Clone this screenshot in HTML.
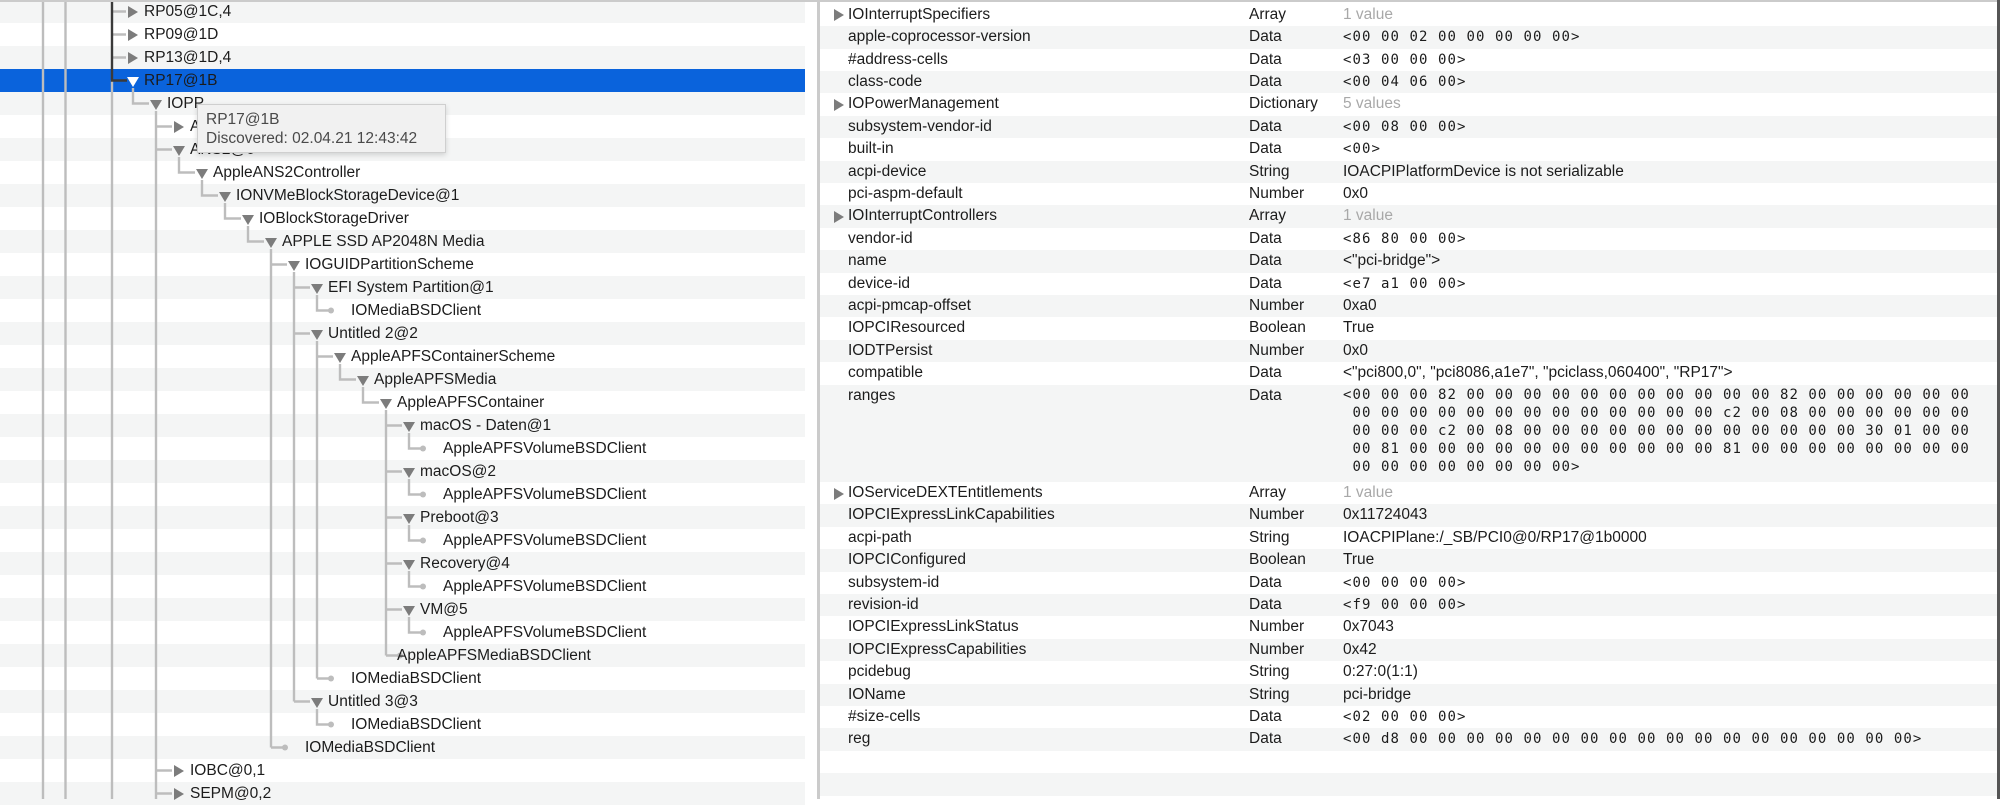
<!DOCTYPE html>
<html><head><meta charset="utf-8"><style>
*{margin:0;padding:0;box-sizing:border-box}
body{width:2000px;height:799px;overflow:hidden;background:#fff;position:relative;font-family:"Liberation Sans",sans-serif;font-size:15.5px;color:#1c1c1c}
.r{position:absolute;left:0;width:805px;height:23px}
.g{background:#f4f5f5}
.sel{background:#0a63dc}
.t{position:absolute;white-space:nowrap;line-height:23px;top:0}
.tc{position:absolute;top:5.5px;width:0;height:0;border-top:6px solid transparent;border-bottom:6px solid transparent;border-left:10px solid #7c7c7c}
.to{position:absolute;top:7.5px;width:0;height:0;border-left:6px solid transparent;border-right:6px solid transparent;border-top:10px solid #7c7c7c}
.rr{position:absolute;left:820px;width:1177px;height:22.4px}
.rr .c{position:absolute;top:0;line-height:22.4px;white-space:nowrap}
.n{left:28px}.ty{left:429px}.v{left:523px}
.m{font-family:"DejaVu Sans Mono",monospace;font-size:14px;letter-spacing:1.07px}
.gr{color:#a8a8a8}
.rt{position:absolute;left:14px;top:5.5px;width:0;height:0;border-top:6px solid transparent;border-bottom:6px solid transparent;border-left:10px solid #7c7c7c}
</style></head><body>

<div class="r g" style="top:0"></div>
<div class="r g" style="top:46px"></div>
<div class="r sel" style="top:69px"></div>
<div class="r g" style="top:92px"></div>
<div class="r g" style="top:138px"></div>
<div class="r g" style="top:184px"></div>
<div class="r g" style="top:230px"></div>
<div class="r g" style="top:276px"></div>
<div class="r g" style="top:322px"></div>
<div class="r g" style="top:368px"></div>
<div class="r g" style="top:414px"></div>
<div class="r g" style="top:460px"></div>
<div class="r g" style="top:506px"></div>
<div class="r g" style="top:552px"></div>
<div class="r g" style="top:598px"></div>
<div class="r g" style="top:644px"></div>
<div class="r g" style="top:690px"></div>
<div class="r g" style="top:736px"></div>
<div class="r g" style="top:782px"></div>

<svg style="position:absolute;left:0;top:0" width="805" height="799">
<g stroke="#bdbdbd" stroke-width="2.4" fill="none">
<line x1="43" y1="0" x2="43" y2="799"/>
<line x1="65.5" y1="0" x2="65.5" y2="799"/>
<line x1="112" y1="80" x2="112" y2="799"/>
<path d="M112 11.5H126M112 34.5H126M112 57.5H126"/>
<path d="M133 88V103.5H149"/>
<path d="M156 111V799M156 126.5H172M156 149.5H172M156 770.5H172M156 793.5H172"/>
<path d="M179 157V172.5H195"/>
<path d="M202 180V195.5H218"/>
<path d="M225 203V218.5H241"/>
<path d="M248 226V241.5H264"/>
<path d="M271 249V747.5M271 264.5H287M271 747.5H285"/>
<path d="M294 272V701.5M294 287.5H310M294 333.5H310M294 701.5H310"/>
<path d="M317 295V310.5H331"/>
<path d="M317 341V678.5M317 356.5H333M317 678.5H331"/>
<path d="M317 709V724.5H331"/>
<path d="M340 364V379.5H356"/>
<path d="M363 387V402.5H379"/>
<path d="M386 410V655.5M386 425.5H402M386 471.5H402M386 517.5H402M386 563.5H402M386 609.5H402M386 655.5H400"/>
<path d="M409 433V448.5H423M409 479V494.5H423M409 525V540.5H423M409 571V586.5H423M409 617V632.5H423"/>
</g>
<g fill="#bdbdbd">
<circle cx="331" cy="310.5" r="3"/><circle cx="331" cy="678.5" r="3"/><circle cx="331" cy="724.5" r="3"/>
<circle cx="285" cy="747.5" r="3"/><circle cx="400" cy="655.5" r="3"/>
<circle cx="423" cy="448.5" r="3"/><circle cx="423" cy="494.5" r="3"/><circle cx="423" cy="540.5" r="3"/><circle cx="423" cy="586.5" r="3"/><circle cx="423" cy="632.5" r="3"/>
</g>
<path d="M112 0V80.5H127" stroke="#3a3a3a" stroke-width="2.4" fill="none"/>
</svg>

<div class="r" style="top:0;background:none"><i class="tc" style="left:128px"></i><span class="t" style="left:144px">RP05@1C,4</span></div>
<div class="r" style="top:23px;background:none"><i class="tc" style="left:128px"></i><span class="t" style="left:144px">RP09@1D</span></div>
<div class="r" style="top:46px;background:none"><i class="tc" style="left:128px"></i><span class="t" style="left:144px">RP13@1D,4</span></div>
<div class="r" style="top:69px;background:none"><i class="to" style="left:127px;border-top-color:#fff"></i><span class="t" style="left:144px">RP17@1B</span></div>
<div class="r" style="top:92px;background:none"><i class="to" style="left:150px"></i><span class="t" style="left:167px">IOPP</span></div>
<div class="r" style="top:115px;background:none"><i class="tc" style="left:174px"></i><span class="t" style="left:190px">A</span></div>
<div class="r" style="top:138px;background:none"><i class="to" style="left:173px"></i><span class="t" style="left:190px">ANS2@0</span></div>
<div class="r" style="top:161px;background:none"><i class="to" style="left:196px"></i><span class="t" style="left:213px">AppleANS2Controller</span></div>
<div class="r" style="top:184px;background:none"><i class="to" style="left:219px"></i><span class="t" style="left:236px">IONVMeBlockStorageDevice@1</span></div>
<div class="r" style="top:207px;background:none"><i class="to" style="left:242px"></i><span class="t" style="left:259px">IOBlockStorageDriver</span></div>
<div class="r" style="top:230px;background:none"><i class="to" style="left:265px"></i><span class="t" style="left:282px">APPLE SSD AP2048N Media</span></div>
<div class="r" style="top:253px;background:none"><i class="to" style="left:288px"></i><span class="t" style="left:305px">IOGUIDPartitionScheme</span></div>
<div class="r" style="top:276px;background:none"><i class="to" style="left:311px"></i><span class="t" style="left:328px">EFI System Partition@1</span></div>
<div class="r" style="top:299px;background:none"><span class="t" style="left:351px">IOMediaBSDClient</span></div>
<div class="r" style="top:322px;background:none"><i class="to" style="left:311px"></i><span class="t" style="left:328px">Untitled 2@2</span></div>
<div class="r" style="top:345px;background:none"><i class="to" style="left:334px"></i><span class="t" style="left:351px">AppleAPFSContainerScheme</span></div>
<div class="r" style="top:368px;background:none"><i class="to" style="left:357px"></i><span class="t" style="left:374px">AppleAPFSMedia</span></div>
<div class="r" style="top:391px;background:none"><i class="to" style="left:380px"></i><span class="t" style="left:397px">AppleAPFSContainer</span></div>
<div class="r" style="top:414px;background:none"><i class="to" style="left:403px"></i><span class="t" style="left:420px">macOS - Daten@1</span></div>
<div class="r" style="top:437px;background:none"><span class="t" style="left:443px">AppleAPFSVolumeBSDClient</span></div>
<div class="r" style="top:460px;background:none"><i class="to" style="left:403px"></i><span class="t" style="left:420px">macOS@2</span></div>
<div class="r" style="top:483px;background:none"><span class="t" style="left:443px">AppleAPFSVolumeBSDClient</span></div>
<div class="r" style="top:506px;background:none"><i class="to" style="left:403px"></i><span class="t" style="left:420px">Preboot@3</span></div>
<div class="r" style="top:529px;background:none"><span class="t" style="left:443px">AppleAPFSVolumeBSDClient</span></div>
<div class="r" style="top:552px;background:none"><i class="to" style="left:403px"></i><span class="t" style="left:420px">Recovery@4</span></div>
<div class="r" style="top:575px;background:none"><span class="t" style="left:443px">AppleAPFSVolumeBSDClient</span></div>
<div class="r" style="top:598px;background:none"><i class="to" style="left:403px"></i><span class="t" style="left:420px">VM@5</span></div>
<div class="r" style="top:621px;background:none"><span class="t" style="left:443px">AppleAPFSVolumeBSDClient</span></div>
<div class="r" style="top:644px;background:none"><span class="t" style="left:397px">AppleAPFSMediaBSDClient</span></div>
<div class="r" style="top:667px;background:none"><span class="t" style="left:351px">IOMediaBSDClient</span></div>
<div class="r" style="top:690px;background:none"><i class="to" style="left:311px"></i><span class="t" style="left:328px">Untitled 3@3</span></div>
<div class="r" style="top:713px;background:none"><span class="t" style="left:351px">IOMediaBSDClient</span></div>
<div class="r" style="top:736px;background:none"><span class="t" style="left:305px">IOMediaBSDClient</span></div>
<div class="r" style="top:759px;background:none"><i class="tc" style="left:174px"></i><span class="t" style="left:190px">IOBC@0,1</span></div>
<div class="r" style="top:782px;background:none"><i class="tc" style="left:174px"></i><span class="t" style="left:190px">SEPM@0,2</span></div>

<div style="position:absolute;left:197px;top:104px;width:249px;height:49px;background:#f1f1f1;border:1px solid #cfcfcf;box-shadow:0 2px 5px rgba(0,0,0,.15);color:#4a4a4a;padding:5px 0 0 8px;line-height:19px;font-size:15.5px">RP17@1B<br>Discovered: 02.04.21 12:43:42</div>

<div style="position:absolute;left:805px;top:0;width:13px;height:799px;background:#fff"></div>
<div style="position:absolute;left:817px;top:0;width:3px;height:799px;background:#cbcbcb"></div>
<div style="position:absolute;left:0;top:0;width:2000px;height:2px;background:#cbcbcb"></div>
<div style="position:absolute;left:1997px;top:0;width:3px;height:799px;background:#555"></div>

<div class="rr" style="top:3.8px"><i class="rt"></i><span class="c n">IOInterruptSpecifiers</span><span class="c ty">Array</span><span class="c v gr">1 value</span></div>
<div class="rr g" style="top:26.2px"><span class="c n">apple-coprocessor-version</span><span class="c ty">Data</span><span class="c v m">&lt;00 00 02 00 00 00 00 00&gt;</span></div>
<div class="rr" style="top:48.6px"><span class="c n">#address-cells</span><span class="c ty">Data</span><span class="c v m">&lt;03 00 00 00&gt;</span></div>
<div class="rr g" style="top:71px"><span class="c n">class-code</span><span class="c ty">Data</span><span class="c v m">&lt;00 04 06 00&gt;</span></div>
<div class="rr" style="top:93.4px"><i class="rt"></i><span class="c n">IOPowerManagement</span><span class="c ty">Dictionary</span><span class="c v gr">5 values</span></div>
<div class="rr g" style="top:115.8px"><span class="c n">subsystem-vendor-id</span><span class="c ty">Data</span><span class="c v m">&lt;00 08 00 00&gt;</span></div>
<div class="rr" style="top:138.2px"><span class="c n">built-in</span><span class="c ty">Data</span><span class="c v m">&lt;00&gt;</span></div>
<div class="rr g" style="top:160.6px"><span class="c n">acpi-device</span><span class="c ty">String</span><span class="c v">IOACPIPlatformDevice is not serializable</span></div>
<div class="rr" style="top:183px"><span class="c n">pci-aspm-default</span><span class="c ty">Number</span><span class="c v">0x0</span></div>
<div class="rr g" style="top:205.4px"><i class="rt"></i><span class="c n">IOInterruptControllers</span><span class="c ty">Array</span><span class="c v gr">1 value</span></div>
<div class="rr" style="top:227.8px"><span class="c n">vendor-id</span><span class="c ty">Data</span><span class="c v m">&lt;86 80 00 00&gt;</span></div>
<div class="rr g" style="top:250.2px"><span class="c n">name</span><span class="c ty">Data</span><span class="c v">&lt;"pci-bridge"&gt;</span></div>
<div class="rr" style="top:272.6px"><span class="c n">device-id</span><span class="c ty">Data</span><span class="c v m">&lt;e7 a1 00 00&gt;</span></div>
<div class="rr g" style="top:295px"><span class="c n">acpi-pmcap-offset</span><span class="c ty">Number</span><span class="c v">0xa0</span></div>
<div class="rr" style="top:317.4px"><span class="c n">IOPCIResourced</span><span class="c ty">Boolean</span><span class="c v">True</span></div>
<div class="rr g" style="top:339.8px"><span class="c n">IODTPersist</span><span class="c ty">Number</span><span class="c v">0x0</span></div>
<div class="rr" style="top:362.2px"><span class="c n">compatible</span><span class="c ty">Data</span><span class="c v">&lt;"pci800,0", "pci8086,a1e7", "pciclass,060400", "RP17"&gt;</span></div>
<div class="rr g" style="top:384.6px;height:97.4px"><span class="c n">ranges</span><span class="c ty">Data</span><div class="c v m" style="top:1px;line-height:18px;white-space:pre">&lt;00 00 00 82 00 00 00 00 00 00 00 00 00 00 00 82 00 00 00 00 00 00
 00 00 00 00 00 00 00 00 00 00 00 00 00 c2 00 08 00 00 00 00 00 00
 00 00 00 c2 00 08 00 00 00 00 00 00 00 00 00 00 00 00 30 01 00 00
 00 81 00 00 00 00 00 00 00 00 00 00 00 81 00 00 00 00 00 00 00 00
 00 00 00 00 00 00 00 00&gt;</div></div>
<div class="rr" style="top:482px"><i class="rt"></i><span class="c n">IOServiceDEXTEntitlements</span><span class="c ty">Array</span><span class="c v gr">1 value</span></div>
<div class="rr g" style="top:504.4px"><span class="c n">IOPCIExpressLinkCapabilities</span><span class="c ty">Number</span><span class="c v">0x11724043</span></div>
<div class="rr" style="top:526.8px"><span class="c n">acpi-path</span><span class="c ty">String</span><span class="c v">IOACPIPlane:/_SB/PCI0@0/RP17@1b0000</span></div>
<div class="rr g" style="top:549.2px"><span class="c n">IOPCIConfigured</span><span class="c ty">Boolean</span><span class="c v">True</span></div>
<div class="rr" style="top:571.6px"><span class="c n">subsystem-id</span><span class="c ty">Data</span><span class="c v m">&lt;00 00 00 00&gt;</span></div>
<div class="rr g" style="top:594px"><span class="c n">revision-id</span><span class="c ty">Data</span><span class="c v m">&lt;f9 00 00 00&gt;</span></div>
<div class="rr" style="top:616.4px"><span class="c n">IOPCIExpressLinkStatus</span><span class="c ty">Number</span><span class="c v">0x7043</span></div>
<div class="rr g" style="top:638.8px"><span class="c n">IOPCIExpressCapabilities</span><span class="c ty">Number</span><span class="c v">0x42</span></div>
<div class="rr" style="top:661.2px"><span class="c n">pcidebug</span><span class="c ty">String</span><span class="c v">0:27:0(1:1)</span></div>
<div class="rr g" style="top:683.6px"><span class="c n">IOName</span><span class="c ty">String</span><span class="c v">pci-bridge</span></div>
<div class="rr" style="top:706px"><span class="c n">#size-cells</span><span class="c ty">Data</span><span class="c v m">&lt;02 00 00 00&gt;</span></div>
<div class="rr g" style="top:728.4px"><span class="c n">reg</span><span class="c ty">Data</span><span class="c v m">&lt;00 d8 00 00 00 00 00 00 00 00 00 00 00 00 00 00 00 00 00 00&gt;</span></div>
<div class="rr" style="top:750.8px"></div>
<div class="rr g" style="top:773.2px"></div>
</body></html>
